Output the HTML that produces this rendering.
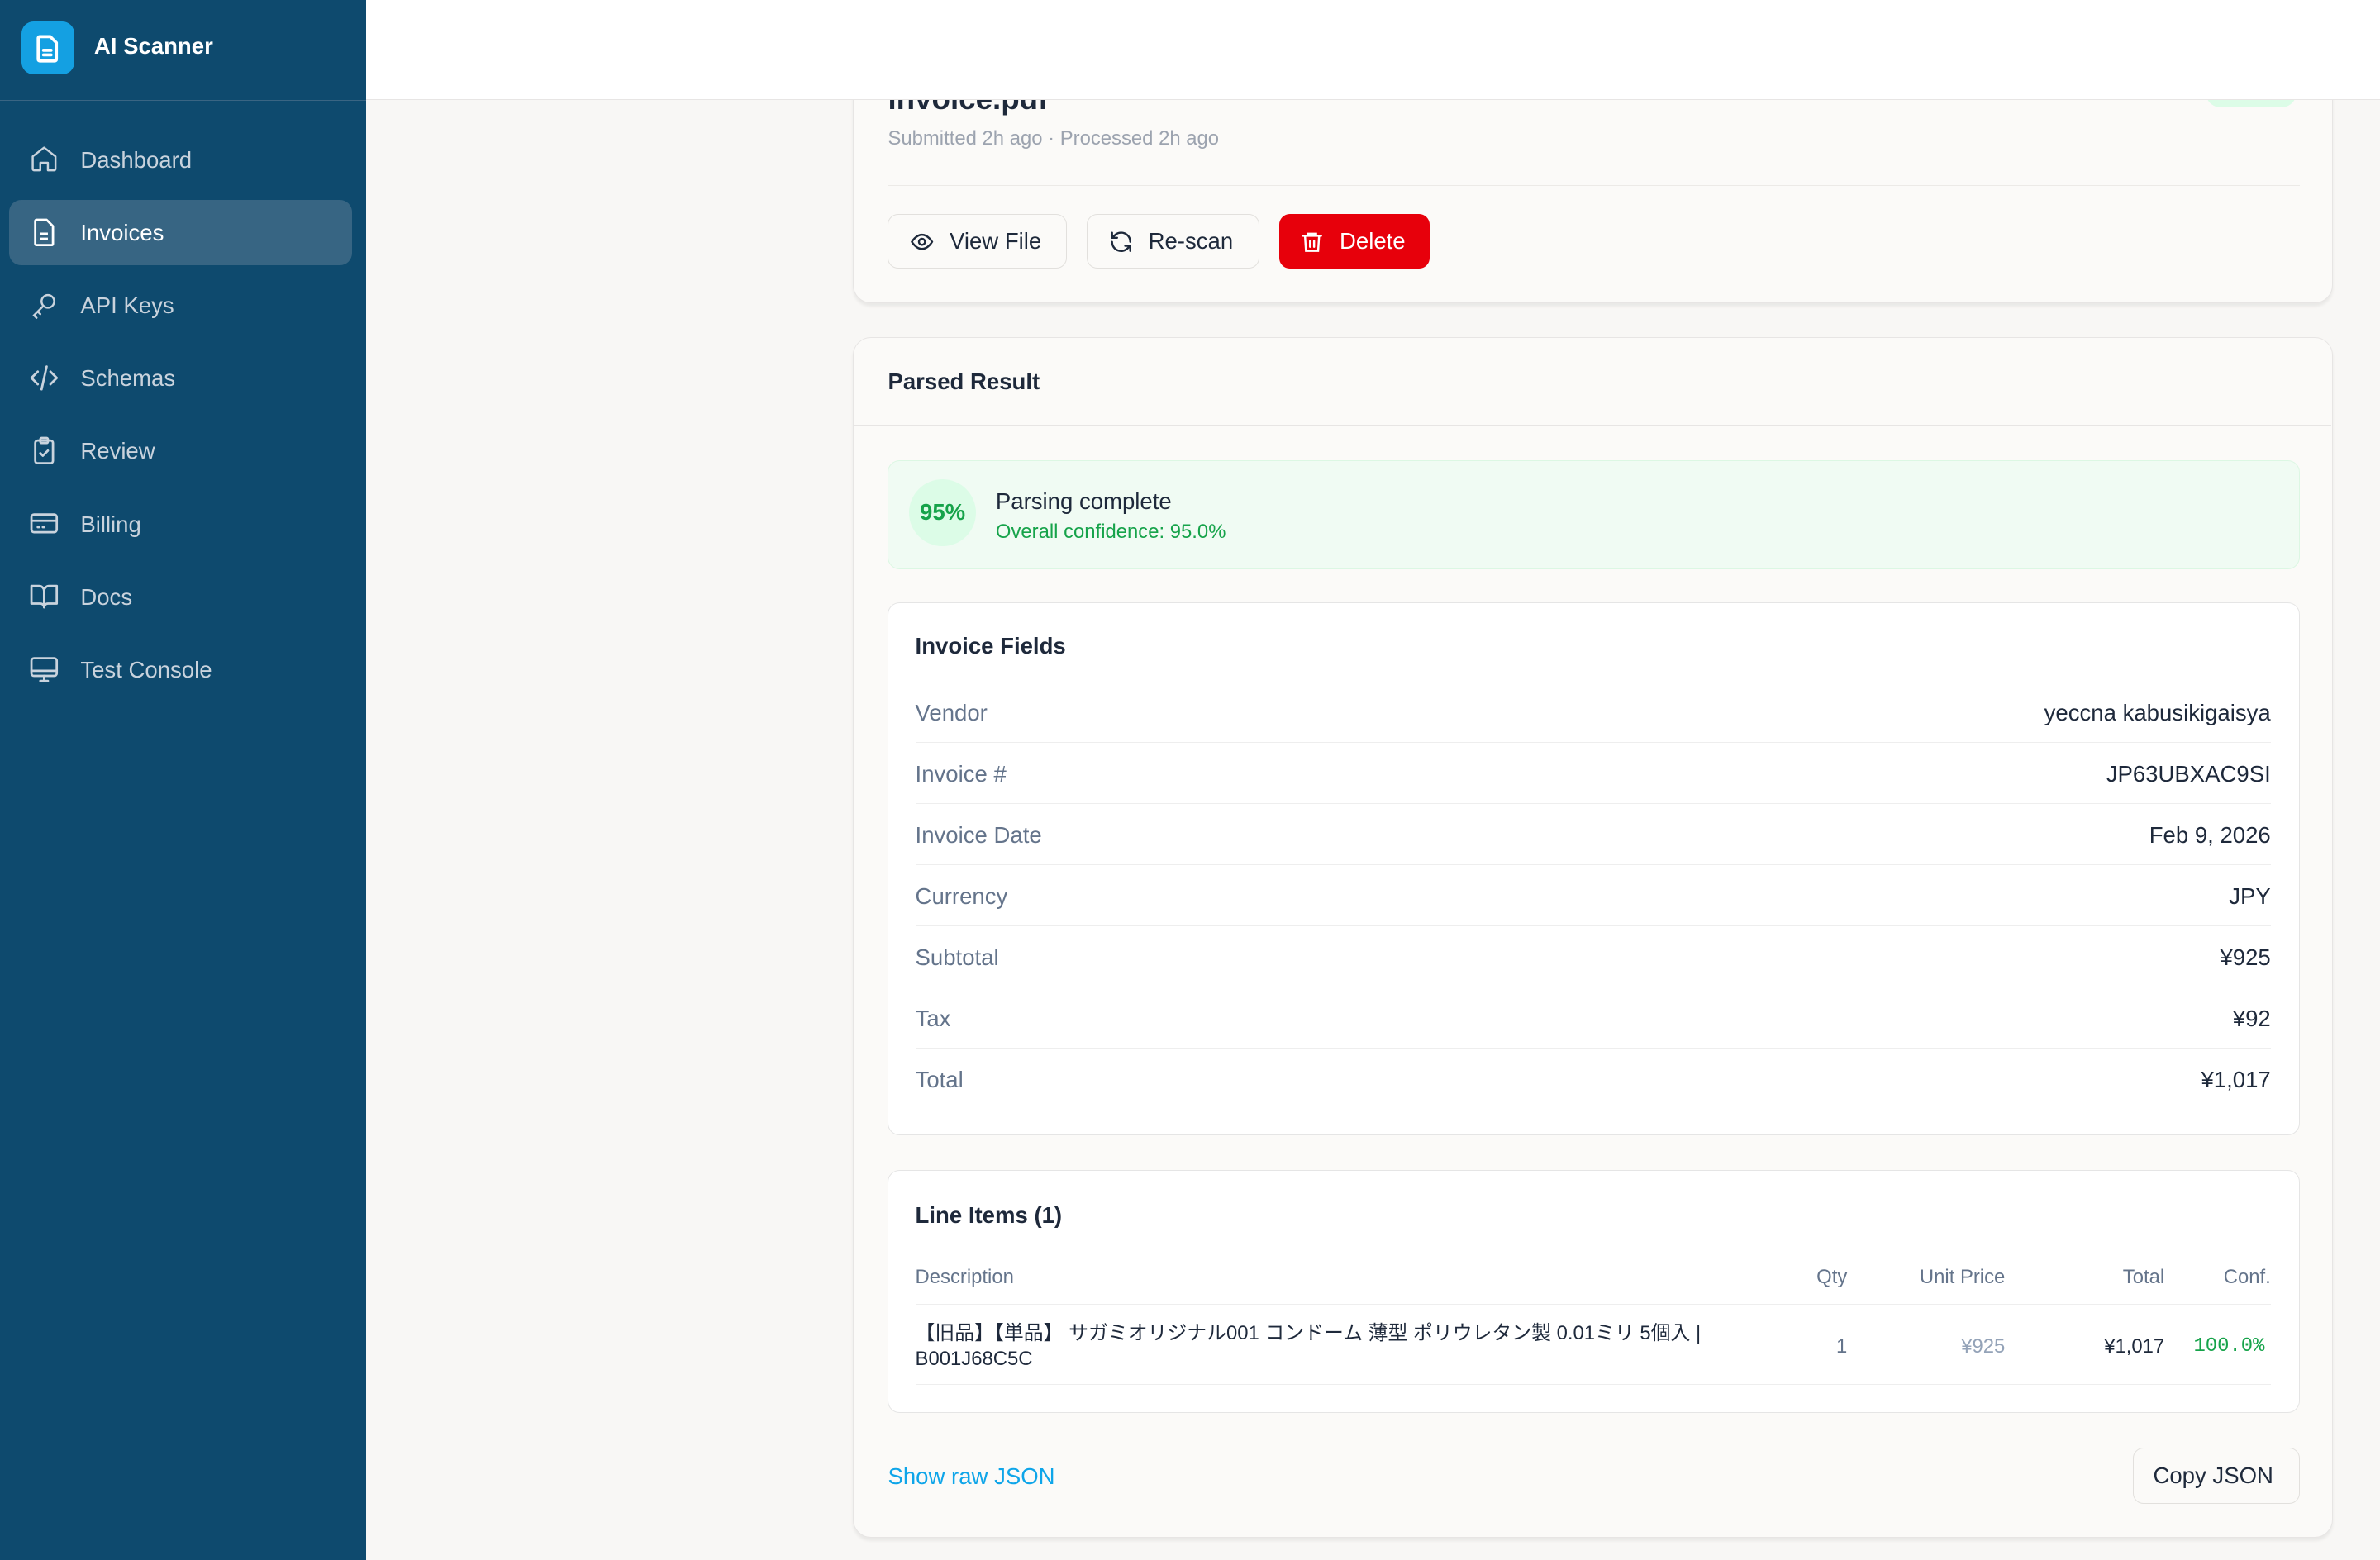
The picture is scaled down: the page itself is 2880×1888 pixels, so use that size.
<!DOCTYPE html>
<html><head><meta charset="utf-8"><style>
*{box-sizing:border-box;margin:0;padding:0}
html,body{width:2880px;height:1888px;overflow:hidden}
body{background:#f8f7f5;font-family:"Liberation Sans","Noto Sans CJK JP",sans-serif}
#r{zoom:1.83673;width:1568px;height:1028px;position:relative;overflow:hidden}
.a{position:absolute}
.side{left:0;top:0;width:241px;height:1028px;background:#0e4a6e}
.logo{left:14px;top:14px;width:35px;height:35px;background:#14a0e2;border-radius:8px}
.nav{left:6px;width:226px;height:43px;border-radius:8px;color:#c9d3dd;font-size:15px}
.nav span{position:absolute;left:47px;top:50%;transform:translateY(-50%)}
.nav svg{position:absolute;left:13px;top:11px}
.top{left:241px;top:0;right:0;height:66px;background:#fff;border-bottom:1px solid #e7e5e4;z-index:5}
.card{left:562px;width:975px;background:#fbfaf8;border:1px solid #e7e5e4;border-radius:12px;box-shadow:0 2px 2px rgba(0,0,0,.06)}
.btn{top:141px;height:36px;border:1px solid #e2e0dd;border-radius:7px;background:#fbfaf8;font-size:15px;color:#1e293b}
.btn span{position:absolute;top:50%;transform:translateY(-50%)}
.box{left:585px;width:930px;background:#fff;border:1px solid #e5e5e5;border-radius:8px}
.row{left:603px;width:893px;height:40.3px;border-bottom:1px solid #eeeeee;font-size:15px}
.row .l{position:absolute;left:0;top:12px;color:#64748b}
.row .v{position:absolute;right:0;top:12px;color:#1e293b}
.th{top:834px;font-size:13px;color:#64748b}
</style></head><body><div id="r">
<div class="a side"></div>
<div class="a" style="left:0;top:66px;width:241px;border-top:1px solid #3a6583"></div>
<div class="a logo"><svg width="35" height="35" viewBox="0 0 35 35" fill="none" stroke="#fff" stroke-width="2" stroke-linecap="round" stroke-linejoin="round"><path d="M12 10h7l4 4v11a1 1 0 0 1-1 1H12a1 1 0 0 1-1-1V11a1 1 0 0 1 1-1z"/><path d="M14.5 19h5M14.5 22h5"/></svg></div>
<div class="a" style="left:62px;top:22px;color:#fff;font-size:15px;font-weight:bold">AI Scanner</div>

<div class="a nav" style="top:84px"><svg width="20" height="20" viewBox="0 0 24 24" fill="none" stroke="#c9d3dd" stroke-width="1.6" stroke-linejoin="round"><path d="M3 10l9-7 9 7v10a1 1 0 0 1-1 1h-5v-6h-6v6H4a1 1 0 0 1-1-1z"/></svg><span>Dashboard</span></div>
<div class="a nav" style="top:132px;background:#376583;color:#fff"><svg width="20" height="20" viewBox="0 0 24 24" fill="none" stroke="#fff" stroke-width="1.8" stroke-linejoin="round"><path d="M6 2h8l5 5v14a1 1 0 0 1-1 1H6a1 1 0 0 1-1-1V3a1 1 0 0 1 1-1z"/><path d="M9 13h6M9 17h6"/></svg><span>Invoices</span></div>
<div class="a nav" style="top:180px"><svg width="20" height="20" viewBox="0 0 24 24" fill="none" stroke="#c9d3dd" stroke-width="1.6" stroke-linecap="round"><circle cx="15" cy="9" r="5"/><path d="M11.5 12.5L4 20l2 2M7 17l2 2"/></svg><span>API Keys</span></div>
<div class="a nav" style="top:228px"><svg width="20" height="20" viewBox="0 0 24 24" fill="none" stroke="#c9d3dd" stroke-width="1.8" stroke-linecap="round" stroke-linejoin="round"><path d="M7 7l-5 5 5 5M17 7l5 5-5 5M14 3l-4 18"/></svg><span>Schemas</span></div>
<div class="a nav" style="top:276px"><svg width="20" height="20" viewBox="0 0 24 24" fill="none" stroke="#c9d3dd" stroke-width="1.8" stroke-linecap="round" stroke-linejoin="round"><rect x="5" y="4" width="14" height="18" rx="2"/><rect x="9" y="2" width="6" height="4" rx="1"/><path d="M9 14l2 2 4-4"/></svg><span>Review</span></div>
<div class="a nav" style="top:324px"><svg width="20" height="20" viewBox="0 0 24 24" fill="none" stroke="#c9d3dd" stroke-width="1.8" stroke-linecap="round"><rect x="2" y="5" width="20" height="14" rx="2"/><path d="M2 10h20M7 15h1M11 15h1"/></svg><span>Billing</span></div>
<div class="a nav" style="top:372px"><svg width="20" height="20" viewBox="0 0 24 24" fill="none" stroke="#c9d3dd" stroke-width="1.8" stroke-linejoin="round"><path d="M2 4h6a4 4 0 0 1 4 4v13a3 3 0 0 0-3-3H2zM22 4h-6a4 4 0 0 0-4 4v13a3 3 0 0 1 3-3h7z"/></svg><span>Docs</span></div>
<div class="a nav" style="top:420px"><svg width="20" height="20" viewBox="0 0 24 24" fill="none" stroke="#c9d3dd" stroke-width="1.8" stroke-linecap="round"><rect x="2" y="3" width="20" height="14" rx="2"/><path d="M2 13h20M9 21h6M12 17v4"/></svg><span>Test Console</span></div>

<div class="a top"></div>

<div class="a card" style="top:-40px;height:240px"></div>
<div class="a" style="left:585px;top:54px;font-size:20px;font-weight:bold;color:#1e293b">invoice.pdf</div>
<div class="a" style="left:1453px;top:50px;width:60px;height:21px;background:#dcfce7;border-radius:10px"></div>
<div class="a" style="left:585px;top:84px;font-size:13px;color:#9ca3af">Submitted 2h ago · Processed 2h ago</div>
<div class="a" style="left:585px;top:122px;width:930px;border-top:1px solid #eceae7"></div>
<div class="a btn" style="left:585px;width:118px"><svg class="a" style="left:14px;top:10px" width="16" height="16" viewBox="0 0 24 24" fill="none" stroke="#1e293b" stroke-width="2"><path d="M2 12s4-7 10-7 10 7 10 7-4 7-10 7S2 12 2 12z"/><circle cx="12" cy="12" r="3"/></svg><span style="left:40px">View File</span></div>
<div class="a btn" style="left:716px;width:114px"><svg class="a" style="left:14px;top:10px" width="16" height="16" viewBox="0 0 24 24" fill="none" stroke="#1e293b" stroke-width="2" stroke-linecap="round"><path d="M21 12a9 9 0 0 0-15.5-6.3L3 8M3 3v5h5M3 12a9 9 0 0 0 15.5 6.3L21 16M21 21v-5h-5"/></svg><span style="left:40px">Re-scan</span></div>
<div class="a btn" style="left:843px;width:99px;background:#e7000b;border-color:#e7000b;color:#fff"><svg class="a" style="left:13px;top:10px" width="16" height="16" viewBox="0 0 24 24" fill="none" stroke="#fff" stroke-width="2" stroke-linecap="round"><path d="M3 6h18M8 6V4h8v2M5 6l1 15h12l1-15M10 11v6M14 11v6"/></svg><span style="left:39px">Delete</span></div>

<div class="a card" style="top:222px;height:791px"></div>
<div class="a" style="left:585px;top:243px;font-size:15px;font-weight:bold;color:#1e293b">Parsed Result</div>
<div class="a" style="left:563px;top:280px;width:973px;border-top:1px solid #e7e5e4"></div>
<div class="a" style="left:585px;top:303px;width:930px;height:72px;background:#f0fbf3;border:1px solid #dcf7e3;border-radius:8px"></div>
<div class="a" style="left:599px;top:316px;width:44px;height:44px;border-radius:50%;background:#dcfce7;color:#16a34a;font-weight:bold;font-size:15px;text-align:center;line-height:44px">95%</div>
<div class="a" style="left:656px;top:322px;font-size:15px;color:#1e293b">Parsing complete</div>
<div class="a" style="left:656px;top:343px;font-size:13px;color:#16a34a">Overall confidence: 95.0%</div>

<div class="a box" style="top:397px;height:351px"></div>
<div class="a" style="left:603px;top:417px;font-size:15px;font-weight:bold;color:#1e293b">Invoice Fields</div>
<div class="a row" style="top:449px"><span class="l">Vendor</span><span class="v">yeccna kabusikigaisya</span></div>
<div class="a row" style="top:489.3px"><span class="l">Invoice #</span><span class="v">JP63UBXAC9SI</span></div>
<div class="a row" style="top:529.6px"><span class="l">Invoice Date</span><span class="v">Feb 9, 2026</span></div>
<div class="a row" style="top:569.9px"><span class="l">Currency</span><span class="v">JPY</span></div>
<div class="a row" style="top:610.2px"><span class="l">Subtotal</span><span class="v">¥925</span></div>
<div class="a row" style="top:650.5px"><span class="l">Tax</span><span class="v">¥92</span></div>
<div class="a row" style="top:690.8px;border:0"><span class="l">Total</span><span class="v">¥1,017</span></div>

<div class="a box" style="top:771px;height:160px"></div>
<div class="a" style="left:603px;top:792px;font-size:15px;font-weight:bold;color:#1e293b">Line Items (1)</div>
<div class="a th" style="left:603px">Description</div>
<div class="a th" style="right:351px">Qty</div>
<div class="a th" style="right:247px">Unit Price</div>
<div class="a th" style="right:142px">Total</div>
<div class="a th" style="right:72px">Conf.</div>
<div class="a" style="left:603px;top:859px;width:893px;border-top:1px solid #eeeeee"></div>
<div class="a" style="left:603px;top:870px;width:530px;font-size:13px;line-height:17px;color:#1e293b">【旧品】【単品】 サガミオリジナル001 コンドーム 薄型 ポリウレタン製 0.01ミリ 5個入 | B001J68C5C</div>
<div class="a" style="right:351px;top:880px;font-size:13px;color:#64748b">1</div>
<div class="a" style="right:247px;top:880px;font-size:13px;color:#94a3b8">¥925</div>
<div class="a" style="right:142px;top:880px;font-size:13px;color:#1e293b">¥1,017</div>
<div class="a" style="right:76px;top:880px;font-size:13px;color:#16a34a;font-family:'Liberation Mono',monospace">100.0%</div>
<div class="a" style="left:603px;top:912px;width:893px;border-top:1px solid #eeeeee"></div>

<div class="a" style="left:585px;top:964px;font-size:15px;color:#0ea5e9">Show raw JSON</div>
<div class="a btn" style="left:1405px;top:954px;width:110px;height:37px"><span style="left:13px">Copy JSON</span></div>
</div></body></html>
